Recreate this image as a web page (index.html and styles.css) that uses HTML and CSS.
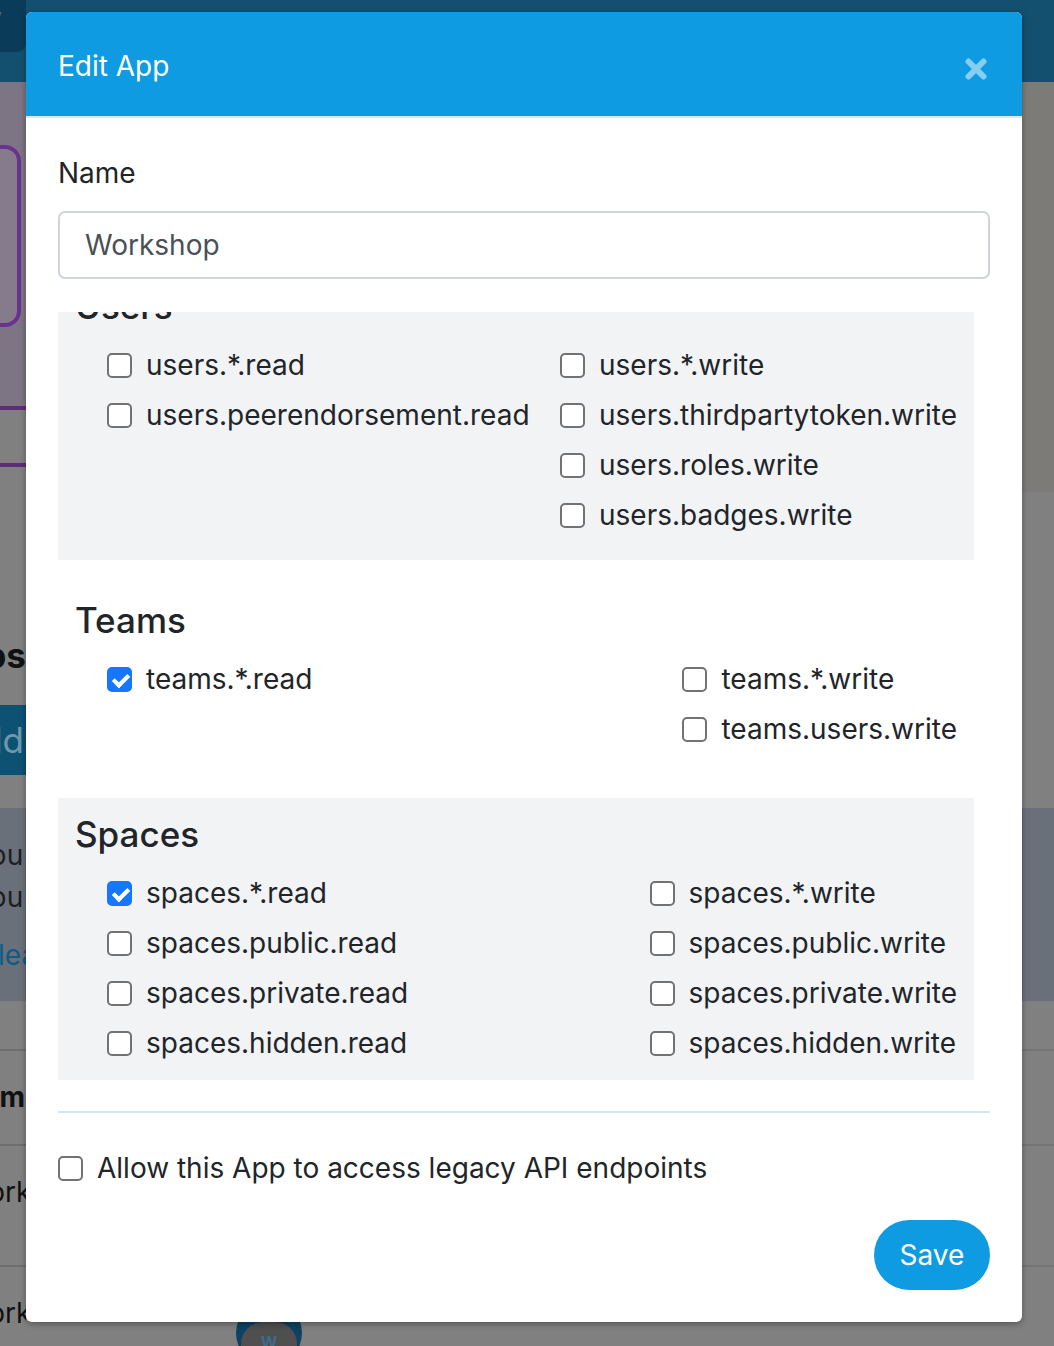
FILE: index.html
```html
<!DOCTYPE html>
<html lang="en">
<head>
<meta charset="utf-8">
<title>Edit App</title>
<link rel="stylesheet" href="styles.css">
</head>
<body>
<div class="page">
  <header class="topbar">
    <div class="topbtn"><span class="topbtn-mark">/</span></div>
  </header>
  <aside class="side side-left">
    <div class="promo"><div class="promo-card"></div></div>
    <div class="tabline"></div>
    <div class="side-heading">Apps</div>
    <div class="side-btn">Add</div>
    <div class="notice">
      <div class="notice-line">You</div>
      <div class="notice-line">You</div>
      <div class="notice-link">learn</div>
    </div>
    <div class="trow trow-head"><span>Nam</span></div>
    <div class="trow trow-mid"><span>Work</span></div>
    <div class="trow trow-last"><span>Work</span></div>
  </aside>
  <main class="page-main">
    <div class="avatar"><div class="avatar-head"></div><div class="avatar-body"><span class="avatar-logo">W</span></div></div>
  </main>
  <aside class="side side-right">
    <div class="warm"></div>
    <div class="plain"></div>
    <div class="notice notice-right"></div>
    <div class="trow trow-head"></div>
    <div class="trow trow-mid"></div>
    <div class="trow trow-last"></div>
  </aside>
</div>

<div class="modal" role="dialog" aria-labelledby="modal-title">
  <div class="modal-header">
    <h2 class="modal-title" id="modal-title">Edit App</h2>
    <button class="modal-close" aria-label="Close">
      <svg width="24" height="24" viewBox="0 0 24 24"><path d="M4.5 4.5 L19.5 19.5 M19.5 4.5 L4.5 19.5" stroke="currentColor" stroke-width="6" stroke-linecap="round" fill="none"/></svg>
    </button>
  </div>
  <div class="modal-body">
    <label class="field-label" for="app-name">Name</label>
    <input class="field-input" id="app-name" type="text" value="Workshop">

    <div class="scopes">
      <div class="scopes-inner">
        <section class="scope alt">
          <h3 class="scope-title">Users</h3>
          <div class="perm-grid">
            <div class="col">
              <label class="check"><input class="cb" type="checkbox">users.*.read</label>
              <label class="check"><input class="cb" type="checkbox">users.peerendorsement.read</label>
            </div>
            <div class="col">
              <label class="check"><input class="cb" type="checkbox">users.*.write</label>
              <label class="check"><input class="cb" type="checkbox">users.thirdpartytoken.write</label>
              <label class="check"><input class="cb" type="checkbox">users.roles.write</label>
              <label class="check"><input class="cb" type="checkbox">users.badges.write</label>
            </div>
          </div>
        </section>
        <section class="scope">
          <h3 class="scope-title">Teams</h3>
          <div class="perm-grid">
            <div class="col">
              <label class="check"><input class="cb" type="checkbox" checked>teams.*.read</label>
            </div>
            <div class="col">
              <label class="check"><input class="cb" type="checkbox">teams.*.write</label>
              <label class="check"><input class="cb" type="checkbox">teams.users.write</label>
            </div>
          </div>
        </section>
        <section class="scope alt">
          <h3 class="scope-title">Spaces</h3>
          <div class="perm-grid">
            <div class="col">
              <label class="check"><input class="cb" type="checkbox" checked>spaces.*.read</label>
              <label class="check"><input class="cb" type="checkbox">spaces.public.read</label>
              <label class="check"><input class="cb" type="checkbox">spaces.private.read</label>
              <label class="check"><input class="cb" type="checkbox">spaces.hidden.read</label>
            </div>
            <div class="col">
              <label class="check"><input class="cb" type="checkbox">spaces.*.write</label>
              <label class="check"><input class="cb" type="checkbox">spaces.public.write</label>
              <label class="check"><input class="cb" type="checkbox">spaces.private.write</label>
              <label class="check"><input class="cb" type="checkbox">spaces.hidden.write</label>
            </div>
          </div>
        </section>
      </div>
    </div>

    <div class="divider"></div>
    <label class="check legacy"><input class="cb" type="checkbox">Allow this App to access legacy API endpoints</label>
    <div class="modal-footer">
      <button class="btn-save">Save</button>
    </div>
  </div>
</div>
</body>
</html>
```

FILE: styles.css
```css
* { box-sizing: border-box; }

html, body {
  margin: 0;
  padding: 0;
}

body {
  width: 1054px;
  height: 1346px;
  overflow: hidden;
  position: relative;
  background: #808080;
  font-family: Inter, "Noto Sans", "Liberation Sans", sans-serif;
  -webkit-font-smoothing: antialiased;
}

/* ---------- dimmed background page ---------- */
.page {
  display: grid;
  grid-template-columns: 26px 1fr 32px;
  grid-template-rows: 82px 1fr;
  height: 1346px;
}

.topbar {
  grid-column: 1 / -1;
  background: #13506f;
}

.topbtn {
  width: 26px;
  height: 52px;
  background: #0a3b58;
  border-bottom-right-radius: 9px;
  overflow: hidden;
}

.topbtn-mark {
  display: block;
  color: #5d7f92;
  font-size: 12px;
  line-height: 12px;
  padding-top: 11px;
  margin-left: -3px;
}

.side {
  display: flex;
  flex-direction: column;
  overflow: hidden;
}

.side > * { flex: none; }

.promo {
  height: 328px;
  background: #7e7584;
  padding-top: 63px;
  border-bottom: 4px solid #5f2b7d;
}

.promo-card {
  width: 23px;
  height: 182px;
  margin-left: -2px;
  border: 4px solid #6a3290;
  border-left: none;
  border-radius: 0 16px 16px 0;
  background: #857b8c;
}

.tabline {
  height: 57px;
  border-bottom: 4px solid #5f2b7d;
}

.side-heading {
  margin-top: 167px;
  height: 42px;
  line-height: 42px;
  font-size: 35px;
  font-weight: 700;
  color: #111;
  white-space: nowrap;
  margin-left: -64px;
}

.side-btn {
  margin-top: 29px;
  height: 70px;
  width: 100px;
  background: #0d5273;
  color: #6f98ad;
  font-size: 35px;
  line-height: 70px;
  white-space: nowrap;
  margin-left: -43px;
}

.notice {
  margin-top: 33px;
  height: 193px;
  background: #6a7079;
  padding-top: 26px;
  font-size: 28px;
  white-space: nowrap;
}

.notice-line {
  height: 42px;
  line-height: 42px;
  color: #1c1f22;
  margin-left: -27px;
}

.notice-link {
  margin-top: 16px;
  height: 42px;
  line-height: 42px;
  color: #0c5c85;
  margin-left: -2px;
}

.trow {
  border-top: 2px solid #6e6e6e;
  font-size: 28px;
  line-height: 42px;
  white-space: nowrap;
  color: #111;
  padding-top: 25px;
}

.trow span {
  display: block;
  margin-left: -38px;
}

.trow-head {
  margin-top: 48px;
  height: 95px;
  font-weight: 700;
}

.trow-mid { height: 121px; }

.trow-last { height: 120px; }

.side-right .trow { border-top-color: #747474; }

.warm {
  height: 410px;
  background: #7d7b78;
}

.plain {
  height: 316px;
}

.notice-right {
  margin-top: 0;
}

.page-main {
  display: flex;
  flex-direction: column;
  padding-top: 1218px;
  padding-left: 210px;
}

.avatar {
  width: 66px;
  height: 66px;
  border-radius: 50%;
  background: #0d4262;
  overflow: hidden;
  display: flex;
  flex-direction: column;
  align-items: center;
}

.avatar-head {
  width: 20px;
  height: 20px;
  border-radius: 50%;
  background: #5b4a3e;
  margin-top: 2px;
}

.avatar-body {
  width: 56px;
  height: 44px;
  border-radius: 22px 22px 0 0;
  background: #4f4f4f;
  text-align: center;
  padding-top: 10px;
}

.avatar-logo {
  color: #3d6b8a;
  font-size: 16px;
  font-weight: 700;
}

/* ---------- modal ---------- */
.modal {
  position: absolute;
  left: 26px;
  top: 12px;
  width: 996px;
  height: 1310px;
  background: #fff;
  border-radius: 6px;
  overflow: hidden;
  box-shadow: 0 2px 6px rgba(0, 0, 0, 0.35);
}

.modal-header {
  height: 106px;
  background: #0f9be1;
  border-bottom: 2px solid #dde6ec;
  display: flex;
  align-items: center;
  justify-content: space-between;
  padding: 0 34px 0 32px;
}

.modal-title {
  margin: 4px 0 0;
  font-size: 28px;
  line-height: 42px;
  font-weight: 400;
  color: #fff;
}

.modal-close {
  border: none;
  background: none;
  padding: 0;
  width: 24px;
  height: 24px;
  color: rgba(255, 255, 255, 0.5);
  display: flex;
  margin-top: 10px;
}

.modal-body {
  padding: 34px 32px 32px;
}

.field-label {
  display: block;
  font-size: 28px;
  line-height: 42px;
  color: #212529;
}

.field-input {
  display: block;
  width: 100%;
  height: 68px;
  margin-top: 17px;
  border: 2px solid #ced4da;
  border-radius: 7px;
  padding: 0 25px;
  font-family: inherit;
  font-size: 28px;
  color: #495057;
  background: #fff;
  outline: none;
}

.scopes {
  margin-top: 33px;
  height: 768px;
  overflow: hidden;
  padding-right: 16px;
}

.scopes-inner {
  margin-top: -42px;
}

.scope {
  padding: 15px 17px 20px;
  margin-bottom: 24px;
}

.scope.alt {
  background: #f2f3f5;
}

.scope-title {
  margin: 0;
  font-size: 35px;
  line-height: 42px;
  font-weight: 500;
  color: #212529;
}

.perm-grid {
  display: flex;
  justify-content: space-between;
  padding-left: 32px;
  margin-top: 13px;
}

.col {
  display: flex;
  flex-direction: column;
}

.check {
  display: flex;
  align-items: center;
  height: 50px;
  font-size: 28px;
  color: #212529;
  white-space: nowrap;
}

.cb {
  -webkit-appearance: none;
  appearance: none;
  flex: none;
  width: 25px;
  height: 25px;
  margin: 0 14px 0 0;
  border: 2px solid #727272;
  border-radius: 5px;
  background: #fff;
  position: relative;
}

.cb:checked {
  background: #1677fe;
  border-color: #1677fe;
}

.cb:checked::after {
  content: "";
  position: absolute;
  left: 6.5px;
  top: 2px;
  width: 6px;
  height: 12px;
  border: solid #fff;
  border-width: 0 4px 4px 0;
  transform: rotate(45deg);
}

.divider {
  margin-top: 31px;
  border-top: 2px solid #d0e9f6;
}

.legacy {
  margin-top: 30px;
}

.modal-footer {
  display: flex;
  justify-content: flex-end;
  margin-top: 27px;
}

.btn-save {
  width: 116px;
  height: 70px;
  border: none;
  border-radius: 35px;
  background: #0f9be1;
  color: #fff;
  font-family: inherit;
  font-size: 28px;
  padding: 0;
}
```
